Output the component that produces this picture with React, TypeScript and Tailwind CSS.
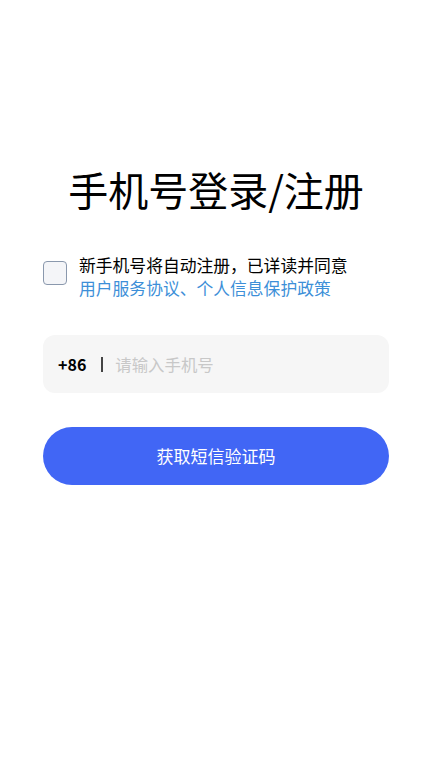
import React, { useState } from 'react';

const font = "font-['Noto_Sans_CJK_SC','Noto_Sans',sans-serif]";

export default function App() {
  const [agreed, setAgreed] = useState(false);
  const [phone, setPhone] = useState('');

  return (
    <div className={`min-h-screen w-full bg-white ${font}`}>
      <div className="flex flex-col px-[43px] pt-[160px]">
        {/* Title */}
        <h1 className="text-center text-[40px] leading-[58px] font-normal text-black">
          手机号登录/注册
        </h1>

        {/* Agreement */}
        <div className="mt-[36px] flex items-start gap-3">
          <button
            onClick={() => setAgreed(v => !v)}
            className={`mt-[7px] h-6 w-6 shrink-0 rounded-[4px] border ${agreed ? 'border-[#4166f5] bg-[#4166f5]' : 'border-[#8a98ad] bg-[#f4f5f8]'}`}
          />
          <div className="text-[16.8px] leading-[23px]">
            <p className="text-black">新手机号将自动注册，已详读并同意</p>
            <p className="text-[#3d8fd8]">用户服务协议、个人信息保护政策</p>
          </div>
        </div>

        {/* Phone input */}
        <div className="mt-[35px] flex h-[58px] items-center rounded-[12px] bg-[#f6f6f6] pl-[15px]">
          <span className="text-[16px] font-bold text-black">+86</span>
          <span className="ml-[15px] h-[15px] w-[2px] bg-[#444]" />
          <input
            value={phone}
            onChange={e => setPhone(e.target.value)}
            placeholder="请输入手机号"
            className="ml-[12px] flex-1 bg-transparent text-[16.4px] text-black outline-none placeholder:text-[#c8c8c8]"
          />
        </div>

        {/* Submit */}
        <button className="mt-[34px] h-[58px] w-full rounded-full bg-[#4166f5] text-[17px] text-white">
          获取短信验证码
        </button>
      </div>
    </div>
  );
}
